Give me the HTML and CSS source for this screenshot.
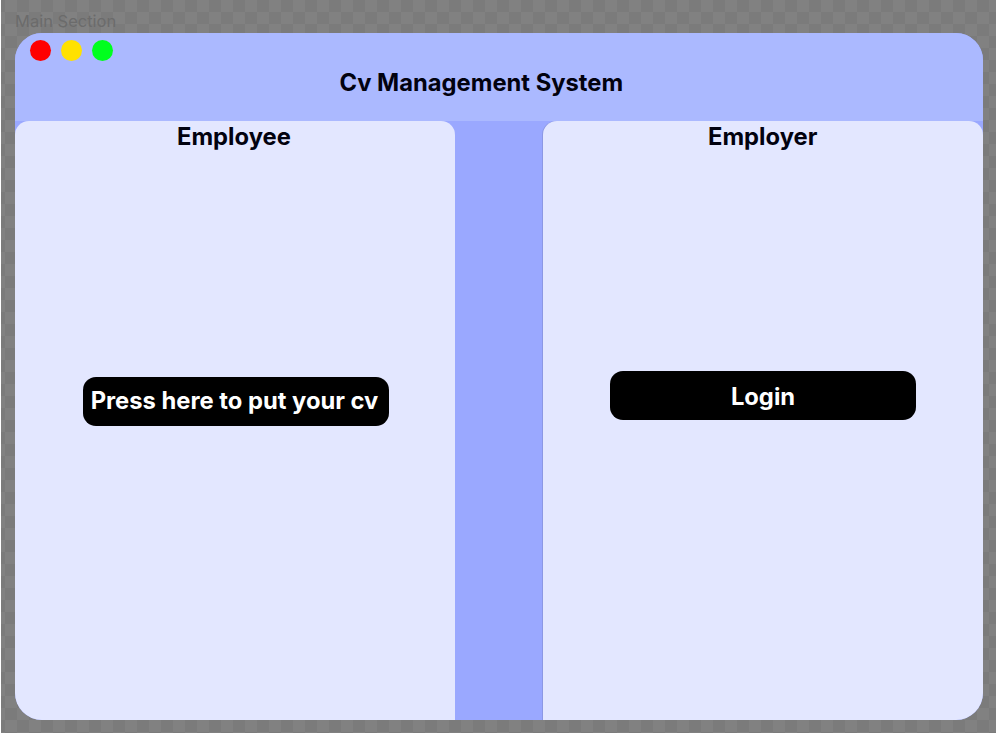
FILE: index.html
```
<!DOCTYPE html>
<html lang="en">
<head>
<meta charset="utf-8">
<title>Cv Management System</title>
<link rel="stylesheet" href="styles.css">
</head>
<body>
<div class="canvas">
  <div class="frame-label">Main Section</div>
  <main class="window">
    <header class="titlebar">
      <div class="controls">
        <span class="dot red"></span>
        <span class="dot yellow"></span>
        <span class="dot green"></span>
      </div>
      <h1 class="title">Cv Management System</h1>
    </header>
    <div class="panels">
      <section class="panel employee">
        <h2 class="heading">Employee</h2>
        <button class="button">Press here to put your cv</button>
      </section>
      <section class="panel employer">
        <h2 class="heading">Employer</h2>
        <button class="button">Login</button>
      </section>
    </div>
  </main>
</div>
</body>
</html>
```

FILE: styles.css
```
* { box-sizing: border-box; }

body {
  margin: 0;
  width: 996px;
  height: 734px;
  overflow: hidden;
  background: #fff;
  font-family: Inter, "Liberation Sans", sans-serif;
}

.canvas {
  height: 733px;
  margin-left: 1px;
  padding: 11px 13px 0 14px;
  background: repeating-conic-gradient(#7b7b7b 0 25%, #818181 0 50%) 4px 0 / 24px 24px;
}

.frame-label {
  height: 22px;
  font-size: 16.5px;
  line-height: 21px;
  color: #6b6b6b;
  white-space: nowrap;
}

.window {
  width: 968px;
  height: 687px;
  overflow: hidden;
  border-radius: 27px;
  background: #9aa8ff;
}

.titlebar {
  height: 88px;
  padding: 7px 0 0 15px;
  background: #abb9ff;
}

.controls {
  display: flex;
  gap: 10px;
  height: 21px;
}

.dot {
  width: 21px;
  height: 21px;
  border-radius: 50%;
}

.red { background: #ff0000; }
.yellow { background: #ffe100; }
.green { background: #00ff1e; }

.title,
.heading,
.button {
  font-size: 23.75px;
  font-weight: 700;
  line-height: 28px;
  white-space: nowrap;
}

.title {
  margin: 8px 0 0 309.5px;
  color: #02020f;
}

.panels {
  display: flex;
  justify-content: space-between;
  height: 599px;
}

.panel {
  width: 440px;
  border-radius: 14px 14px 0 0;
  background: #e3e7ff;
}

.employer { box-shadow: -1px 0 0 #8c98e4; }

.heading {
  margin: 2px 0 0;
  color: #02020f;
}

.employee .heading { margin-left: 162px; }
.employer .heading { margin-left: 165px; }

.button {
  display: block;
  width: 306px;
  height: 49px;
  padding: 0;
  border: 0;
  border-radius: 13px;
  background: #000;
  color: #fff;
  font-family: inherit;
}

.employee .button { margin: 226px 0 0 68px; padding: 0 3px 2px 0; }
.employer .button { margin: 220px 0 0 67px; padding-top: 2px; }
```
